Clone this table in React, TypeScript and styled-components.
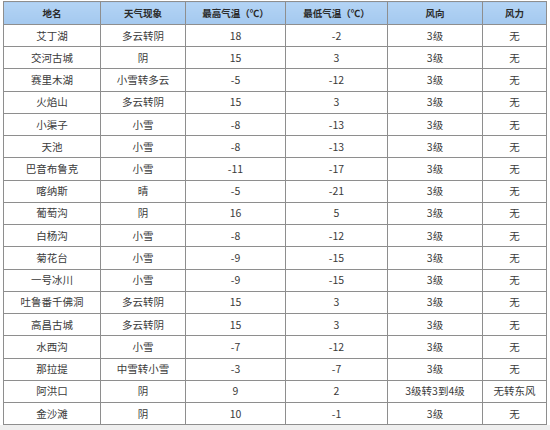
import styled, { createGlobalStyle } from "styled-components";

const GlobalStyle = createGlobalStyle`
  html, body {
    margin: 0;
    padding: 0;
    background: #f3f3f3;
  }
  body {
    font-family: "Noto Sans CJK SC", "Noto Sans", sans-serif;
  }
`;

const Page = styled.div`
  width: 550px;
  height: 430px;
  padding: 1px 0 0 3px;
  box-sizing: border-box;
  background: #ffffff;
  border-bottom: 5px solid #efefef;
`;

const Table = styled.table`
  border-collapse: collapse;
  table-layout: fixed;
  width: 543px;
  color: #3a3a3a;
`;

const HeadCell = styled.th`
  background: linear-gradient(#b3d4f5, #a4c9ef);
  border: 1px solid #8e8e8e;
  height: 22px;
  padding: 0;
  font-size: 9.5px;
  font-weight: 700;
  color: #2a2a2a;
  text-align: center;
  line-height: 22px;
`;

const Row = styled.tr`
  height: 22.24px;
`;

const Cell = styled.td`
  border: 1px solid #8e8e8e;
  padding: 0;
  font-size: 10.5px;
  text-align: center;
  line-height: 20px;
  white-space: nowrap;
  background: #ffffff;
`;

const columns = [
  { title: "地名", width: 97 },
  { title: "天气现象", width: 85 },
  { title: "最高气温（℃）", width: 100 },
  { title: "最低气温（℃）", width: 102 },
  { title: "风向", width: 95 },
  { title: "风力", width: 64 }
];

const rows: string[][] = [
  ["艾丁湖", "多云转阴", "18", "-2", "3级", "无"],
  ["交河古城", "阴", "15", "3", "3级", "无"],
  ["赛里木湖", "小雪转多云", "-5", "-12", "3级", "无"],
  ["火焰山", "多云转阴", "15", "3", "3级", "无"],
  ["小渠子", "小雪", "-8", "-13", "3级", "无"],
  ["天池", "小雪", "-8", "-13", "3级", "无"],
  ["巴音布鲁克", "小雪", "-11", "-17", "3级", "无"],
  ["喀纳斯", "晴", "-5", "-21", "3级", "无"],
  ["葡萄沟", "阴", "16", "5", "3级", "无"],
  ["白杨沟", "小雪", "-8", "-12", "3级", "无"],
  ["菊花台", "小雪", "-9", "-15", "3级", "无"],
  ["一号冰川", "小雪", "-9", "-15", "3级", "无"],
  ["吐鲁番千佛洞", "多云转阴", "15", "3", "3级", "无"],
  ["高昌古城", "多云转阴", "15", "3", "3级", "无"],
  ["水西沟", "小雪", "-7", "-12", "3级", "无"],
  ["那拉提", "中雪转小雪", "-3", "-7", "3级", "无"],
  ["阿洪口", "阴", "9", "2", "3级转3到4级", "无转东风"],
  ["金沙滩", "阴", "10", "-1", "3级", "无"]
];

export default function App() {
  return (
    <>
      <GlobalStyle />
      <Page>
        <Table>
          <colgroup>
            {columns.map((c) => (
              <col key={c.title} style={{ width: c.width }} />
            ))}
          </colgroup>
          <thead>
            <tr>
              {columns.map((c) => (
                <HeadCell key={c.title}>{c.title}</HeadCell>
              ))}
            </tr>
          </thead>
          <tbody>
            {rows.map((r) => (
              <Row key={r[0]}>
                {r.map((v, i) => (
                  <Cell key={i}>{v}</Cell>
                ))}
              </Row>
            ))}
          </tbody>
        </Table>
      </Page>
    </>
  );
}
